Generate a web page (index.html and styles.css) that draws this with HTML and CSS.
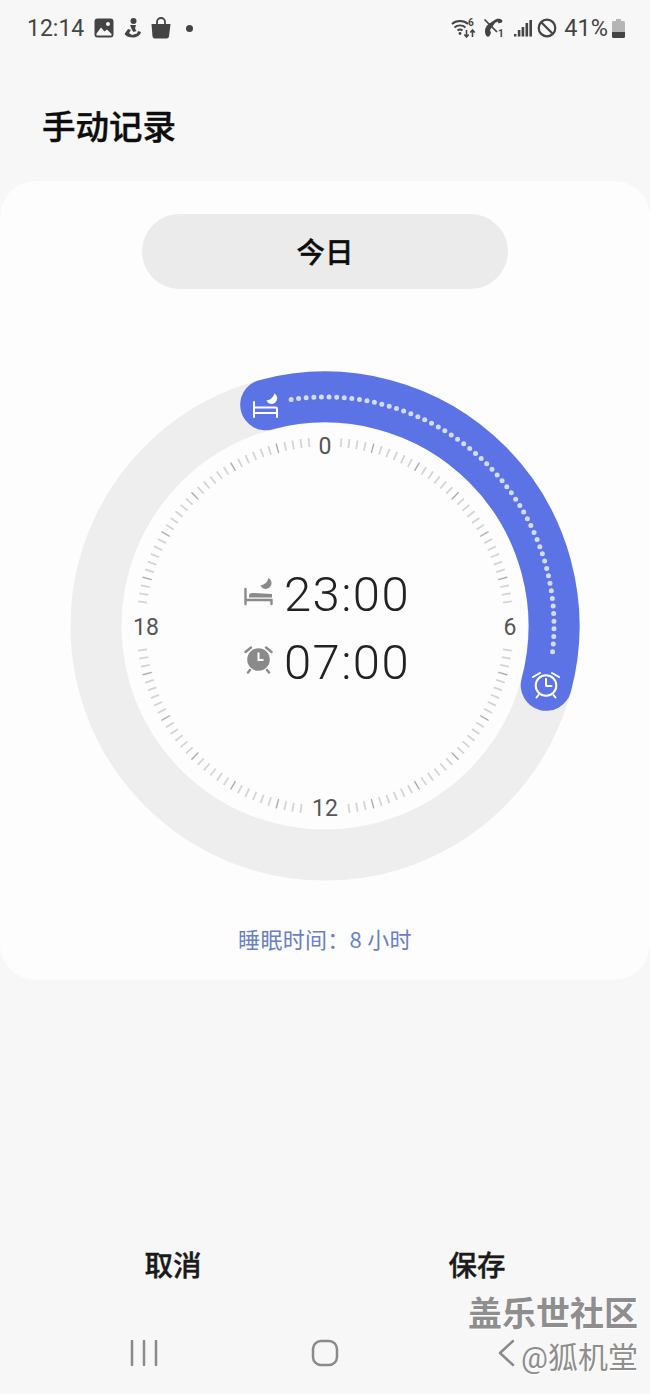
FILE: index.html
```html
<!DOCTYPE html>
<html lang="zh">
<head>
<meta charset="utf-8">
<title>手动记录</title>
<link rel="stylesheet" href="styles.css">
</head>
<body>
<div class="page">
  <header class="status">
    <div class="status-group left">
      <span class="status-time">12:14</span>
      <svg class="ic" width="20" height="20" viewBox="0 0 20 20"><rect x="0.5" y="0.5" width="19" height="19" rx="3" class="dark"/><circle cx="14" cy="6" r="2" class="white"/><path d="M2.500 15.500 7 9.500l3.500 4 2.500-2 4.500 4.500v1.500h-15z" class="white"/></svg>
      <svg class="ic man" width="17" height="20" viewBox="0 0 17 20"><circle cx="9.500" cy="3" r="3" class="dark"/><path d="M6 7h6l-1 3.500 1.500 2.500-3 1-1.500-2zM4 11l3 1-2 3 3 2 5-1.500 1-2.500 3 1c-.5 3-4 5.500-8 5.500-3.500 0-7-1-8.500-3.500z" class="dark"/></svg>
      <svg class="ic bag" width="20" height="22" viewBox="0 0 20 22"><path d="M6 7V5a4 4 0 0 1 8 0v2" fill="none" stroke="#444" stroke-width="1.800"/><path d="M0.500 7h19l-1.500 12.500a2.500 2.500 0 0 1-2.500 2h-11.500a2.500 2.500 0 0 1-2.500-2z" class="dark"/></svg>
      <span class="status-dot"></span>
    </div>
    <div class="status-group right">
      <svg class="ic" width="25" height="20" viewBox="0 0 25 20"><path d="M1 6c4-4 12-4 16 0M3.500 9.500c3-2.800 8-2.800 11 0M6.500 12.500c1.500-1.300 3.500-1.300 5 0" fill="none" stroke="#444" stroke-width="1.900"/><circle cx="9" cy="15.500" r="1.400" class="dark"/><path d="M15.500 12v7M13.300 16.500l2.200 2.500 2.200-2.500M21.500 19v-7M19.300 14.500l2.200-2.500 2.200 2.500" fill="none" stroke="#444" stroke-width="1.600"/><text x="17" y="8" class="tiny">6</text></svg>
      <svg class="ic phone" width="20" height="20" viewBox="0 0 20 20"><path d="M11 2.500c2-2 6-2.200 8-.5.800.8.500 2.500-.8 2.700l-2.700.5-1-1.700-2.500 1.500L7 12l1 3-1.500 3c-.8 1-2.500.8-3.200-.2C1.500 15 1.500 10.500 4 7.500c2-2.300 5-3.500 7-5z" class="dark"/><path d="M1.500 1.500 14 14" stroke="#444" stroke-width="1.700"/><text x="15" y="19" class="tiny">1</text></svg>
      <svg class="ic signal" width="18" height="18" viewBox="0 0 18 18"><rect x="0" y="15" width="2.400" height="2.500" class="dark"/><rect x="3.800" y="11" width="2.600" height="6.500" class="dark"/><rect x="7.600" y="8" width="2.600" height="9.500" class="dark"/><rect x="11.500" y="4" width="2.600" height="13.500" class="dark"/><rect x="15.400" y="1" width="2.600" height="16.500" class="dark"/></svg>
      <svg class="ic" width="20" height="20" viewBox="0 0 20 20"><circle cx="10" cy="10" r="8.300" fill="none" stroke="#444" stroke-width="2.200"/><path d="M4 4l12 12" stroke="#444" stroke-width="2.200"/></svg>
      <span class="status-pct">41%</span>
      <svg class="ic" width="13" height="19" viewBox="0 0 13 19"><path d="M4 0h5v2h2.500a1.500 1.500 0 0 1 1.500 1.500V13H0V3.500A1.500 1.500 0 0 1 1.500 2H4z" fill="#b5b5b5"/><path d="M0 13h13v4.500a1.500 1.500 0 0 1-1.500 1.500h-10A1.500 1.500 0 0 1 0 17.500z" class="dark"/></svg>
    </div>
  </header>

  <h1 class="title">手动记录</h1>

  <main class="card">
    <div class="date-pill">今日</div>
    <svg class="clock" width="650" height="520" viewBox="0 366 650 520">
      <circle cx="325" cy="626" r="229" class="ring"/>
      <circle cx="325" cy="626" r="184" class="tick-minor" pathLength="144"/>
      <circle cx="325" cy="626" r="184" class="tick-major" pathLength="24"/>
      <rect x="312" y="430" width="26" height="28" class="mask"/>
      <rect x="304" y="794" width="42" height="28" class="mask"/>
      <rect x="497" y="605" width="26" height="42" class="mask"/>
      <rect x="128" y="605" width="36" height="42" class="mask"/>
      <text x="325" y="454" class="hour">0</text>
      <text x="510" y="635" class="hour">6</text>
      <text x="325" y="816" class="hour">12</text>
      <text x="146" y="635" class="hour">18</text>

      <path d="M265.700 404.800A229 229 0 0 1 546.200 685.300" class="band"/>
      <path d="M291.150 399.500A229 229 0 0 1 551.900 657.100" class="dots"/>

      <path d="M254 402v15M254 413h23v4M277 413v-4c0-1-.7-1.500-1.500-1.500H254" class="line-white"/>
      <path d="M274.500 393.500a5.600 5.600 0 1 1-8 7 10 10 0 0 0 8-7z" class="fill-white"/>

      <g class="line-white">
        <circle cx="546" cy="685.500" r="10.300"/>
        <path d="M546 679v7h5.500M533 677l7-4M559 677l-7-4M538.500 695l-2 2.500M553.500 695l2 2.500"/>
      </g>

      <path d="M245.500 589v15M245.500 600h26v4" class="line-grey"/>
      <path d="M249 597.500v-2c0-1.500 1-2.500 3-2.500l20 1v3.500z" class="fill-grey"/>
      <path d="M268.500 578a5.800 5.800 0 1 1-8 7.500 10 10 0 0 0 8-7.500z" class="fill-grey"/>
      <text x="284" y="611" class="time">23:00</text>

      <circle cx="258.500" cy="659.500" r="11.300" class="fill-grey"/>
      <path d="M258.500 652.500v7.500h5" class="line-hand"/>
      <path d="M245.500 652l5.500-4.500M271.500 652l-5.500-4.500M250 670l-2 2.500M267 670l2 2.500" class="line-grey"/>
      <text x="284" y="679" class="time">07:00</text>
    </svg>
    <p class="duration">睡眠时间：8 小时</p>
  </main>

  <div class="spacer"></div>

  <div class="actions">
    <button class="action">取消</button>
    <button class="action">保存</button>
  </div>

  <nav class="navbar">
    <svg width="28" height="26" viewBox="0 0 28 26" class="nav-recent"><path d="M2 1v24M14 1v24M26 1v24"/></svg>
    <svg width="28" height="28" viewBox="0 0 28 28" class="nav-home"><rect x="2" y="2" width="24" height="24" rx="8"/></svg>
    <svg width="20" height="28" viewBox="0 0 20 28" class="nav-back"><path d="M16 2 3 14l13 12"/></svg>
  </nav>

  <div class="watermark">
    <span class="wm-top">盖乐世社区</span>
    <span class="wm-bottom">@狐机堂</span>
  </div>
</div>
</body>
</html>
```
FILE: styles.css
```css
* { box-sizing: border-box; }
html, body { margin: 0; padding: 0; }
body {
  background: #f7f7f7;
  font-family: "Noto Sans CJK SC", "Noto Sans", sans-serif;
}
.page {
  position: relative;
  width: 650px;
  height: 1394px;
  display: flex;
  flex-direction: column;
  overflow: hidden;
}
.status {
  height: 56px;
  padding: 0 25px 0 27px;
  display: flex;
  justify-content: space-between;
  align-items: center;
  color: #444;
  font-family: Roboto, sans-serif;
  font-size: 23px;
}
.status-group { display: flex; align-items: center; }
.status-group.left { gap: 10px; }
.status-group.right { gap: 7px; }
.status-pct { font-size: 23.500px; margin-right: -3px; }
.status-dot { width: 7px; height: 7px; border-radius: 50%; background: #444; margin-left: 5px; }
.ic { display: block; flex: none; }
.signal { margin-left: 4px; margin-right: -2px; }
.dark { fill: #444; }
.white { fill: #f7f7f7; }
.tiny { font-family: Roboto, sans-serif; font-size: 10px; font-weight: 700; fill: #444; }
.title {
  margin: 0;
  padding: 45px 0 0 42px;
  height: 125px;
  font-size: 33.500px;
  line-height: 48px;
  font-weight: 500;
  -webkit-text-stroke: 0.4px #0d0d0d;
  color: #0d0d0d;
}
.card {
  height: 799px;
  background: #fdfdfd;
  border-radius: 36px;
  padding-top: 33px;
  display: flex;
  flex-direction: column;
  align-items: center;
}
.date-pill {
  width: 366px;
  height: 75px;
  border-radius: 38px;
  background: #ebebeb;
  color: #0d0d0d;
  font-size: 28.500px;
  font-weight: 500;
  -webkit-text-stroke: 0.4px #0d0d0d;
  line-height: 73px;
  text-align: center;
}
.clock { display: block; margin-top: 77px; flex: none; }
.ring { fill: none; stroke: #eeeeee; stroke-width: 51; }
.tick-minor { fill: none; stroke: #d4d4d4; stroke-width: 9; stroke-dasharray: 0.22 0.78; stroke-dashoffset: 0.11; }
.tick-major { fill: none; stroke: #9a9a9a; stroke-width: 10; stroke-dasharray: 0.014 0.986; stroke-dashoffset: 0.007; }
.mask { fill: #fdfdfd; }
.hour { font-family: Roboto, sans-serif; font-size: 23px; fill: #555; text-anchor: middle; }
.band { fill: none; stroke: #5c73e6; stroke-width: 51; stroke-linecap: round; }
.dots { fill: none; stroke: #d5dcf8; stroke-width: 5; stroke-linecap: round; stroke-dasharray: 0 7.620; }
.line-white { fill: none; stroke: #fff; stroke-width: 2; stroke-linecap: round; stroke-linejoin: round; }
.fill-white { fill: #fff; }
.line-grey { fill: none; stroke: #8a8a8a; stroke-width: 2.400; stroke-linecap: round; }
.fill-grey { fill: #8a8a8a; }
.line-hand { fill: none; stroke: #fff; stroke-width: 2; }
.time { font-family: Roboto, sans-serif; font-size: 49px; font-weight: 300; letter-spacing: 1.400px; fill: #222; }
.duration {
  margin: 36px 0 0;
  font-size: 22px;
  line-height: 32px;
  letter-spacing: 0.300px;
  color: #6a80c4;
}
.spacer { flex: 1; }
.actions {
  display: flex;
  height: 60px;
  padding: 0 21px;
  margin-bottom: 24px;
}
.action {
  flex: 1;
  background: none;
  border: 0;
  padding: 0;
  font: 500 28.500px/60px "Noto Sans CJK SC", sans-serif;
  -webkit-text-stroke: 0.4px #1a1a1a;
  color: #1a1a1a;
}
.navbar {
  height: 76px;
  padding: 0 0 6px 130px;
  display: flex;
  align-items: center;
}
.nav-home { margin-left: 153px; }
.nav-back { margin-left: 158px; }
.nav-recent path, .nav-home rect, .nav-back path { fill: none; stroke: #8a8a8a; stroke-width: 2.500; stroke-linecap: round; stroke-linejoin: round; }
.watermark {
  position: absolute;
  right: 12px;
  top: 1288px;
  display: flex;
  flex-direction: column;
  align-items: flex-end;
  color: #8e8e8e;
  text-shadow: 1px 1px 0 #fff;
}
.wm-top { font-size: 34px; line-height: 48px; font-weight: 700; }
.wm-bottom { font-size: 30px; line-height: 44px; font-weight: 400; font-family: Roboto, "Noto Sans CJK SC", sans-serif; }
```
